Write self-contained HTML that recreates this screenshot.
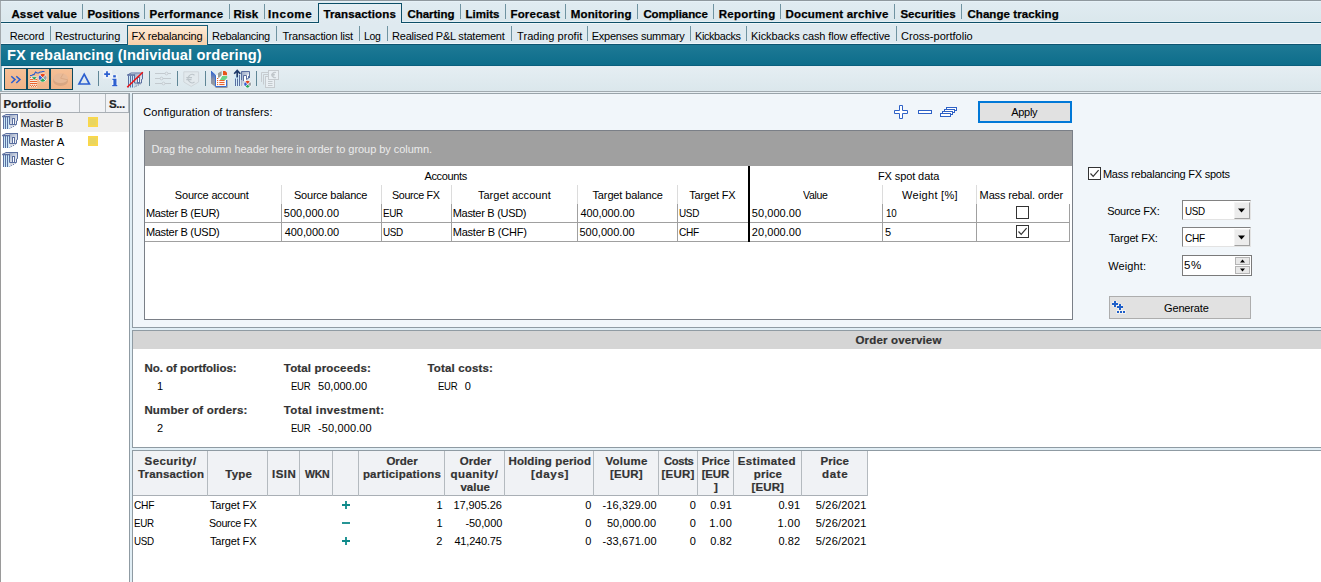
<!DOCTYPE html><html><head><meta charset="utf-8"><title>FX rebalancing</title><style>
html,body{margin:0;padding:0;}
body{width:1321px;height:582px;overflow:hidden;position:relative;background:#fff;font-family:"Liberation Sans",sans-serif;font-size:11px;}
.a,.t,.b{position:absolute;}
.t{white-space:nowrap;line-height:normal;transform-origin:0 0;}
.b{box-sizing:border-box;}
svg{position:absolute;overflow:visible;}

</style></head><body>
<div class="a" style="left:0px;top:0px;width:1321px;height:23px;background:linear-gradient(#e1ecf2,#dae7ec);"></div>
<div class="a" style="left:0px;top:0px;width:1321px;height:1px;background:#8f989e;"></div>
<div class="a" style="left:0px;top:1px;width:1321px;height:1px;background:#e6f1f7;"></div>
<div class="a" style="left:0px;top:21px;width:1321px;height:1px;background:#e4eff5;"></div>
<div class="a" style="left:0px;top:22px;width:1321px;height:1px;background:#0d4f68;"></div>
<div class="a" style="left:0px;top:23px;width:1321px;height:21px;background:#dfeaf0;"></div>
<div class="a" style="left:0px;top:23px;width:1321px;height:1px;background:#eef6f9;"></div>
<div class="a" style="left:0px;top:43px;width:1321px;height:1px;background:#eef6fa;"></div>
<div class="b" style="left:318px;top:3px;width:84px;height:20px;border:1px solid #0d4f68;background:linear-gradient(#e7eff4,#dfeaf0);border-bottom:none;"></div>
<div class="a" style="left:319px;top:23px;width:82px;height:1px;background:#e0eaf0;"></div>
<div class="a" style="left:82px;top:4px;width:1px;height:15px;background:#6f93a1;"></div>
<div class="a" style="left:144px;top:4px;width:1px;height:15px;background:#6f93a1;"></div>
<div class="a" style="left:229px;top:4px;width:1px;height:15px;background:#6f93a1;"></div>
<div class="a" style="left:264px;top:4px;width:1px;height:15px;background:#6f93a1;"></div>
<div class="a" style="left:460px;top:4px;width:1px;height:15px;background:#6f93a1;"></div>
<div class="a" style="left:505px;top:4px;width:1px;height:15px;background:#6f93a1;"></div>
<div class="a" style="left:565px;top:4px;width:1px;height:15px;background:#6f93a1;"></div>
<div class="a" style="left:637px;top:4px;width:1px;height:15px;background:#6f93a1;"></div>
<div class="a" style="left:713px;top:4px;width:1px;height:15px;background:#6f93a1;"></div>
<div class="a" style="left:780px;top:4px;width:1px;height:15px;background:#6f93a1;"></div>
<div class="a" style="left:894px;top:4px;width:1px;height:15px;background:#6f93a1;"></div>
<div class="a" style="left:961px;top:4px;width:1px;height:15px;background:#6f93a1;"></div>
<div class="a" style="left:50px;top:26px;width:1px;height:15px;background:#6f93a1;"></div>
<div class="a" style="left:276px;top:26px;width:1px;height:15px;background:#6f93a1;"></div>
<div class="a" style="left:359px;top:26px;width:1px;height:15px;background:#6f93a1;"></div>
<div class="a" style="left:387px;top:26px;width:1px;height:15px;background:#6f93a1;"></div>
<div class="a" style="left:511px;top:26px;width:1px;height:15px;background:#6f93a1;"></div>
<div class="a" style="left:587px;top:26px;width:1px;height:15px;background:#6f93a1;"></div>
<div class="a" style="left:690px;top:26px;width:1px;height:15px;background:#6f93a1;"></div>
<div class="a" style="left:746px;top:26px;width:1px;height:15px;background:#6f93a1;"></div>
<div class="a" style="left:896px;top:26px;width:1px;height:15px;background:#6f93a1;"></div>
<div class="a" style="left:0px;top:44px;width:1321px;height:22px;background:linear-gradient(#1f7a96,#0c6d8b);"></div>
<div class="a" style="left:0px;top:44px;width:1321px;height:1px;background:#0e5470;"></div>
<div class="a" style="left:0px;top:65px;width:1321px;height:1px;background:#0a607e;"></div>
<div class="b" style="left:127px;top:25px;width:81px;height:20px;border:1px solid #1b5e78;background:linear-gradient(#fdebd8,#f9cfa8);border-bottom:none;"></div>
<div class="a" style="left:0px;top:1px;width:1px;height:65px;background:#a3a9ad;"></div>
<div class="a" style="left:0px;top:66px;width:1321px;height:25px;background:linear-gradient(#e5eef3,#dbe7ec);"></div>
<div class="a" style="left:0px;top:66px;width:2px;height:27px;background:#8ab4c2;"></div>
<div class="a" style="left:2px;top:67px;width:2px;height:24px;background:#f4f9fb;border-radius:2px 0 0 2px;"></div>
<div class="a" style="left:0px;top:91px;width:1321px;height:1px;background:#a2abb0;"></div>
<div class="a" style="left:0px;top:92px;width:1321px;height:1px;background:#e8eff3;"></div>
<div class="a" style="left:4px;top:68px;width:69px;height:22px;background:#0d4a5e;"></div>
<div class="a" style="left:5px;top:69px;width:21px;height:20px;background:linear-gradient(#f6c096,#f0b488);"></div>
<div class="a" style="left:28px;top:69px;width:21px;height:20px;background:linear-gradient(#f6c096,#f0b488);"></div>
<div class="a" style="left:51px;top:69px;width:21px;height:20px;background:linear-gradient(#f6c096,#f0b488);"></div>
<div class="a" style="left:98px;top:71px;width:1px;height:15px;background:#5f8696;"></div>
<div class="a" style="left:149px;top:71px;width:1px;height:15px;background:#5f8696;"></div>
<div class="a" style="left:177px;top:71px;width:1px;height:15px;background:#5f8696;"></div>
<div class="a" style="left:205px;top:71px;width:1px;height:15px;background:#5f8696;"></div>
<div class="a" style="left:256px;top:71px;width:1px;height:15px;background:#5f8696;"></div>
<div class="a" style="left:0px;top:93px;width:130px;height:489px;background:#fff;"></div>
<div class="a" style="left:0px;top:93px;width:1px;height:489px;background:#9a9a9a;"></div>
<div class="a" style="left:1px;top:93px;width:129px;height:1px;background:#9aa4aa;"></div>
<div class="a" style="left:129px;top:93px;width:1px;height:489px;background:#8f9ba3;"></div>
<div class="a" style="left:130px;top:93px;width:2px;height:489px;background:#e1eef5;"></div>
<div class="a" style="left:1px;top:94px;width:128px;height:18px;background:#f0f2f5;"></div>
<div class="a" style="left:1px;top:112px;width:128px;height:1px;background:#a9afb5;"></div>
<div class="a" style="left:79px;top:94px;width:1px;height:18px;background:#b4babf;"></div>
<div class="a" style="left:105px;top:94px;width:1px;height:18px;background:#b4babf;"></div>
<div class="a" style="left:128px;top:94px;width:1px;height:18px;background:#b4babf;"></div>
<div class="a" style="left:20px;top:113px;width:109px;height:19px;background:#efefef;"></div>
<div class="a" style="left:88px;top:117px;width:10px;height:10px;background:#fbd748;"></div>
<div class="a" style="left:90px;top:119px;width:6px;height:6px;background:#e9d55f;box-shadow:0 0 0 1px #f3d755;"></div>
<div class="a" style="left:88px;top:136px;width:10px;height:10px;background:#fbd748;"></div>
<div class="a" style="left:90px;top:138px;width:6px;height:6px;background:#e9d55f;box-shadow:0 0 0 1px #f3d755;"></div>
<div class="a" style="left:132px;top:93px;width:1189px;height:235px;background:#f1f6fa;"></div>
<div class="a" style="left:132px;top:93px;width:1189px;height:1px;background:#9aa4aa;"></div>
<div class="a" style="left:132px;top:93px;width:1px;height:235px;background:#8f9ba3;"></div>
<div class="a" style="left:132px;top:327px;width:1189px;height:1px;background:#8f9ba3;"></div>
<div class="a" style="left:132px;top:328px;width:1189px;height:2px;background:#e1eef5;"></div>
<div class="b" style="left:144px;top:130px;width:929px;height:190px;border:1px solid #7a7f87;background:#fff;"></div>
<div class="a" style="left:145px;top:131px;width:927px;height:35px;background:#a0a0a0;"></div>
<div class="a" style="left:281px;top:185px;width:1px;height:19px;background:#dcdcdc;"></div>
<div class="a" style="left:381px;top:185px;width:1px;height:19px;background:#dcdcdc;"></div>
<div class="a" style="left:451px;top:185px;width:1px;height:19px;background:#dcdcdc;"></div>
<div class="a" style="left:577px;top:185px;width:1px;height:19px;background:#dcdcdc;"></div>
<div class="a" style="left:677px;top:185px;width:1px;height:19px;background:#dcdcdc;"></div>
<div class="a" style="left:882px;top:185px;width:1px;height:19px;background:#dcdcdc;"></div>
<div class="a" style="left:976px;top:185px;width:1px;height:19px;background:#dcdcdc;"></div>
<div class="a" style="left:281px;top:204px;width:1px;height:38px;background:#a0a0a0;"></div>
<div class="a" style="left:381px;top:204px;width:1px;height:38px;background:#a0a0a0;"></div>
<div class="a" style="left:451px;top:204px;width:1px;height:38px;background:#a0a0a0;"></div>
<div class="a" style="left:577px;top:204px;width:1px;height:38px;background:#a0a0a0;"></div>
<div class="a" style="left:677px;top:204px;width:1px;height:38px;background:#a0a0a0;"></div>
<div class="a" style="left:882px;top:204px;width:1px;height:38px;background:#a0a0a0;"></div>
<div class="a" style="left:976px;top:204px;width:1px;height:38px;background:#a0a0a0;"></div>
<div class="a" style="left:1069px;top:204px;width:1px;height:38px;background:#a0a0a0;"></div>
<div class="a" style="left:145px;top:222px;width:925px;height:1px;background:#a0a0a0;"></div>
<div class="a" style="left:145px;top:241px;width:925px;height:1px;background:#a0a0a0;"></div>
<div class="a" style="left:748px;top:166px;width:2px;height:76px;background:#000;"></div>
<div class="b" style="left:1016px;top:206px;width:13px;height:13px;border:1px solid #333;background:#fff;"></div>
<div class="b" style="left:1016px;top:225px;width:13px;height:13px;border:1px solid #333;background:#fff;"></div>
<div class="b" style="left:978px;top:101px;width:94px;height:22px;border:2px solid #0078d7;background:#e1e1e1;"></div>
<div class="b" style="left:1088px;top:167px;width:13px;height:13px;border:1px solid #333;background:#fff;"></div>
<div class="b" style="left:1182px;top:200px;width:69px;height:20px;border:1px solid #a0a0a0;background:#fff;border-top-color:#828282;border-left-color:#828282;border-right-color:#e3e3e3;border-bottom-color:#e3e3e3;"></div>
<div class="b" style="left:1234px;top:202px;width:16px;height:17px;border:1px solid #f4f4f4;background:#ececec;border-right-color:#a0a0a0;border-bottom-color:#a0a0a0;"></div>
<div class="b" style="left:1182px;top:227px;width:69px;height:20px;border:1px solid #a0a0a0;background:#fff;border-top-color:#828282;border-left-color:#828282;border-right-color:#e3e3e3;border-bottom-color:#e3e3e3;"></div>
<div class="b" style="left:1234px;top:229px;width:16px;height:17px;border:1px solid #f4f4f4;background:#ececec;border-right-color:#a0a0a0;border-bottom-color:#a0a0a0;"></div>
<div class="b" style="left:1182px;top:255px;width:70px;height:21px;border:1px solid #7a7a7a;background:#fff;"></div>
<div class="b" style="left:1235px;top:257px;width:15px;height:8px;border:1px solid #b4b4b4;background:#e8e8e8;"></div>
<div class="b" style="left:1235px;top:266px;width:15px;height:8px;border:1px solid #b4b4b4;background:#e8e8e8;"></div>
<div class="b" style="left:1109px;top:296px;width:142px;height:23px;border:1px solid #adadad;background:#e1e1e1;"></div>
<div class="a" style="left:132px;top:330px;width:1189px;height:118px;background:#fff;"></div>
<div class="a" style="left:132px;top:330px;width:1189px;height:1px;background:#8f9ba3;"></div>
<div class="a" style="left:132px;top:330px;width:1px;height:118px;background:#8f9ba3;"></div>
<div class="a" style="left:133px;top:331px;width:1188px;height:18px;background:#d5d5d5;"></div>
<div class="a" style="left:132px;top:447px;width:1189px;height:1px;background:#8f9ba3;"></div>
<div class="a" style="left:132px;top:448px;width:1189px;height:2px;background:#e1eef5;"></div>
<div class="a" style="left:132px;top:450px;width:1189px;height:132px;background:#fff;"></div>
<div class="a" style="left:132px;top:450px;width:1189px;height:1px;background:#8f9ba3;"></div>
<div class="a" style="left:132px;top:450px;width:1px;height:132px;background:#8f9ba3;"></div>
<div class="a" style="left:133px;top:451px;width:735px;height:44px;background:#f0f2f5;"></div>
<div class="a" style="left:133px;top:495px;width:735px;height:1px;background:#a9afb5;"></div>
<div class="a" style="left:207px;top:451px;width:1px;height:45px;background:#b4babf;"></div>
<div class="a" style="left:267px;top:451px;width:1px;height:45px;background:#b4babf;"></div>
<div class="a" style="left:299px;top:451px;width:1px;height:45px;background:#b4babf;"></div>
<div class="a" style="left:332px;top:451px;width:1px;height:45px;background:#b4babf;"></div>
<div class="a" style="left:358px;top:451px;width:1px;height:45px;background:#b4babf;"></div>
<div class="a" style="left:444px;top:451px;width:1px;height:45px;background:#b4babf;"></div>
<div class="a" style="left:504px;top:451px;width:1px;height:45px;background:#b4babf;"></div>
<div class="a" style="left:593px;top:451px;width:1px;height:45px;background:#b4babf;"></div>
<div class="a" style="left:658px;top:451px;width:1px;height:45px;background:#b4babf;"></div>
<div class="a" style="left:697px;top:451px;width:1px;height:45px;background:#b4babf;"></div>
<div class="a" style="left:733px;top:451px;width:1px;height:45px;background:#b4babf;"></div>
<div class="a" style="left:801px;top:451px;width:1px;height:45px;background:#b4babf;"></div>
<div class="a" style="left:867px;top:451px;width:1px;height:45px;background:#b4babf;"></div><svg width="1321" height="582" viewBox="0 0 1321 582" style="left:0;top:0;pointer-events:none">
<defs>
<linearGradient id="gpf" x1="0" y1="0" x2="1" y2="1"><stop offset="0" stop-color="#9aa8c4"/><stop offset="1" stop-color="#ffffff"/></linearGradient>
<linearGradient id="gbk" x1="0" y1="0" x2="0" y2="1"><stop offset="0" stop-color="#2c5fd0"/><stop offset="0.55" stop-color="#8a93a8"/><stop offset="1" stop-color="#9a9a9a"/></linearGradient>
</defs>
<g transform="translate(2,113)" opacity="1"><polygon points="7.5,2 15.5,2 15.5,7.5 14.5,11 7.5,11" fill="url(#gpf)"/><polygon points="7.5,11.5 14.5,11.5 7.5,15" fill="#aeb6c8" opacity=".55"/><rect x="1" y="4" width="6" height="12" fill="#c9e9fa"/><path d="M4,1.5 H16 M15.5,1.5 V7.5 M0.5,3.5 L4,1.5" stroke="#5b6fa0" stroke-width="1" fill="none"/><path d="M0.3,3.5 H8" stroke="#5b6fa0" stroke-width="1.6" fill="none"/><path d="M1.5,4 V16 M3.5,4 V16 M5.5,4 V16 M7.5,3.5 V11.5 M7.5,11.5 H14.5 M14.5,8 V11.5 M15.5,7 L14.5,8.5" stroke="#5b6fa0" stroke-width="1" fill="none"/><rect x="10.5" y="5.5" width="2" height="6" fill="#fff" stroke="#5b6fa0" stroke-width="1"/><path d="M7.5,15.5 L13.5,12.5" stroke="#5b6fa0" stroke-width="1" stroke-dasharray="1,1" fill="none"/></g>
<g transform="translate(2,132)" opacity="1"><polygon points="7.5,2 15.5,2 15.5,7.5 14.5,11 7.5,11" fill="url(#gpf)"/><polygon points="7.5,11.5 14.5,11.5 7.5,15" fill="#aeb6c8" opacity=".55"/><rect x="1" y="4" width="6" height="12" fill="#c9e9fa"/><path d="M4,1.5 H16 M15.5,1.5 V7.5 M0.5,3.5 L4,1.5" stroke="#5b6fa0" stroke-width="1" fill="none"/><path d="M0.3,3.5 H8" stroke="#5b6fa0" stroke-width="1.6" fill="none"/><path d="M1.5,4 V16 M3.5,4 V16 M5.5,4 V16 M7.5,3.5 V11.5 M7.5,11.5 H14.5 M14.5,8 V11.5 M15.5,7 L14.5,8.5" stroke="#5b6fa0" stroke-width="1" fill="none"/><rect x="10.5" y="5.5" width="2" height="6" fill="#fff" stroke="#5b6fa0" stroke-width="1"/><path d="M7.5,15.5 L13.5,12.5" stroke="#5b6fa0" stroke-width="1" stroke-dasharray="1,1" fill="none"/></g>
<g transform="translate(2,151)" opacity="1"><polygon points="7.5,2 15.5,2 15.5,7.5 14.5,11 7.5,11" fill="url(#gpf)"/><polygon points="7.5,11.5 14.5,11.5 7.5,15" fill="#aeb6c8" opacity=".55"/><rect x="1" y="4" width="6" height="12" fill="#c9e9fa"/><path d="M4,1.5 H16 M15.5,1.5 V7.5 M0.5,3.5 L4,1.5" stroke="#5b6fa0" stroke-width="1" fill="none"/><path d="M0.3,3.5 H8" stroke="#5b6fa0" stroke-width="1.6" fill="none"/><path d="M1.5,4 V16 M3.5,4 V16 M5.5,4 V16 M7.5,3.5 V11.5 M7.5,11.5 H14.5 M14.5,8 V11.5 M15.5,7 L14.5,8.5" stroke="#5b6fa0" stroke-width="1" fill="none"/><rect x="10.5" y="5.5" width="2" height="6" fill="#fff" stroke="#5b6fa0" stroke-width="1"/><path d="M7.5,15.5 L13.5,12.5" stroke="#5b6fa0" stroke-width="1" stroke-dasharray="1,1" fill="none"/></g>
<path d="M11.3,76.2 L15,79.6 L11.3,83 M16.3,76.2 L20,79.6 L16.3,83" stroke="#2c5fd0" stroke-width="1.5" fill="none"/>
<path d="M30,75.6 H31.5 L33,74.6 H34 L35.6,72 L37,73 H38.5 L40,72 H41.5 L42.5,71.5 H44.5" stroke="#2c5fd0" stroke-width="1.1" fill="none"/>
<rect x="30" y="76.6" width="7.2" height="10.6" fill="#fbe9dc"/>
<path d="M30,77.4 H37.2" stroke="#e8541a" stroke-width="0.9" stroke-dasharray="1,1"/>
<path d="M30,79.5 H37.2 M30,81.5 H37.2 M30,83.5 H37.2" stroke="#e8541a" stroke-width="0.9"/>
<path d="M30,85.3 H37.2" stroke="#e8541a" stroke-width="1" stroke-dasharray="1,1"/>
<path d="M31,86.3 H37.2" stroke="#e8541a" stroke-width="1" stroke-dasharray="1,1"/>
<polygon points="31.3,76.8 37.3,76.8 34.3,80.2" fill="#1f9a50" stroke="#fff" stroke-width=".6"/>
<circle cx="42.7" cy="77.8" r="4.3" fill="#fff"/>
<path d="M42.7,77.8 L40.01,75.11 A3.8,3.8 0 0 1 45.39,75.11 Z" fill="#e8451a"/>
<path d="M42.7,77.8 L45.39,75.11 A3.8,3.8 0 0 1 45.39,80.49 Z" fill="#9aa0a4"/>
<path d="M42.7,77.8 L45.39,80.49 A3.8,3.8 0 0 1 40.01,80.49 Z" fill="#2aa65a"/>
<path d="M42.7,77.8 L40.01,80.49 A3.8,3.8 0 0 1 40.01,75.11 Z" fill="#3a5fd0"/>
<path d="M39.736000000000004,74.836 L45.664,80.764 M45.664,74.836 L39.736000000000004,80.764" stroke="#fff" stroke-width=".7"/>
<path d="M53.3,78.2 v3 a7.3,4.8 0 0 0 14.6,0 v-3 z" fill="#d8a682"/>
<ellipse cx="60.6" cy="78.2" rx="7.3" ry="4.9" fill="#e8ba98"/>
<path d="M60.6,78.2 L63.2,73.8 M60.6,78.2 L67.6,79.8" stroke="#d8a682" stroke-width=".8"/>
<path d="M84.2,74.2 L89.4,84 H79 Z" stroke="#2c5fd0" stroke-width="1.7" fill="none" stroke-linejoin="miter"/>
<rect x="103" y="70" width="9" height="8.5" fill="#eef3f7" opacity=".9"/>
<path d="M107,71.3 V77 M104.2,74.1 H110" stroke="#2c5fd0" stroke-width="1.8"/>
<rect x="112" y="74.5" width="5.5" height="12.5" fill="#f2f6f9" opacity=".9"/>
<rect x="113.2" y="75.2" width="2.6" height="2.2" fill="#2c5fd0"/>
<path d="M112.4,79.4 H115.8 V85.4 M112.2,85.7 H117.3" stroke="#2c5fd0" stroke-width="1.3" fill="none"/>
<rect x="113.4" y="79" width="2.4" height="7" fill="#2c5fd0"/>
<g transform="translate(127,71.5)" opacity="1"><polygon points="7.5,2 15.5,2 15.5,7.5 14.5,11 7.5,11" fill="url(#gpf)"/><polygon points="7.5,11.5 14.5,11.5 7.5,15" fill="#aeb6c8" opacity=".55"/><rect x="1" y="4" width="6" height="12" fill="#c9e9fa"/><path d="M4,1.5 H16 M15.5,1.5 V7.5 M0.5,3.5 L4,1.5" stroke="#5b6fa0" stroke-width="1" fill="none"/><path d="M0.3,3.5 H8" stroke="#5b6fa0" stroke-width="1.6" fill="none"/><path d="M1.5,4 V16 M3.5,4 V16 M5.5,4 V16 M7.5,3.5 V11.5 M7.5,11.5 H14.5 M14.5,8 V11.5 M15.5,7 L14.5,8.5" stroke="#5b6fa0" stroke-width="1" fill="none"/><rect x="10.5" y="5.5" width="2" height="6" fill="#fff" stroke="#5b6fa0" stroke-width="1"/><path d="M7.5,15.5 L13.5,12.5" stroke="#5b6fa0" stroke-width="1" stroke-dasharray="1,1" fill="none"/></g>
<path d="M127.2,87.2 L142.8,72.2" stroke="#f01010" stroke-width="1.5"/>
<path d="M155,73.5 H171 M155,78.5 H171 M155,83.5 H171" stroke="#c3cacf" stroke-width="1"/>
<circle cx="166.5" cy="73.5" r="1.4" fill="#e3ebf0" stroke="#c3cacf" stroke-width=".9"/>
<circle cx="161.5" cy="78.5" r="1.4" fill="#e3ebf0" stroke="#c3cacf" stroke-width=".9"/>
<circle cx="163.5" cy="83.5" r="1.4" fill="#e3ebf0" stroke="#c3cacf" stroke-width=".9"/>
<path d="M183.8,71.8 H198.6 V82 L191.2,86.4 L183.8,82 Z" fill="#e2e9ed" stroke="#cfd6da" stroke-width="1"/>
<path d="M194.5,75.2 A4,4.2 0 1 0 194.5,82 M186.3,77.6 H192 M186.3,79.6 H191.5" stroke="#bcc4c9" stroke-width="1.1" fill="none"/>
<polygon points="211,71 215.5,75.2 215.5,87 211,83.4" fill="url(#gbk)"/>
<rect x="215.5" y="75" width="11" height="11.5" fill="#fff"/>
<path d="M215.5,87.5 H227.2 V80" stroke="#9a9a9a" stroke-width="1" fill="none"/>
<path d="M211,71 L215.5,75.2 V86.5 H226.5 V80" stroke="#3a6fd0" stroke-width="1" fill="none"/>
<polygon points="218,73.2 221.6,71 221.6,75.6 218.6,78.2 218,77" fill="#9a9e98"/>
<polygon points="223,71 225.2,71 227,72.8 227,75.2 223,75.2" fill="#e8541a"/>
<polygon points="222.2,76 227.2,76 227.2,78 225,80.2 219.8,80.2" fill="#6dd38a"/>
<path d="M217,78.5 h1.2 M217,80.6 h1.2 M217,82.6 h1.2 M217,84.6 h1.2 M219.3,80.6 H224.6 M219.3,82.6 H224.6 M219.3,84.6 H224.6" stroke="#e8541a" stroke-width="1"/>
<rect x="234.3" y="75" width="6" height="11" fill="#d3ecfa"/>
<path d="M235.5,78.5 V86 M237.5,78.5 V86 M239.5,75 V86" stroke="#5b6fa0" stroke-width="1"/>
<path d="M237.2,70.6 V77.5 M234.2,73.8 L237.2,70.5 L240.3,73.8" stroke="#1f3a6a" stroke-width="1.7" fill="none"/>
<polygon points="241.5,71.5 249.5,71.5 249.5,78 248,82 241.5,86" fill="url(#gpf)"/>
<path d="M241.5,80 V71.5 H249.5 V78" stroke="#5b6fa0" stroke-width="1" fill="none"/>
<path d="M241.5,80 V86" stroke="#a9b3c8" stroke-width="1" fill="none"/>
<polygon points="243,79 244.5,76 246.5,76 248.5,73.5 248.5,77 246,81 243,81" fill="#fff"/>
<path d="M243.5,81 V75.5 H246.5 V79.5 M248.5,76 V78.5 M246.5,79.5 L248.5,78" stroke="#5b6fa0" stroke-width="1" fill="none"/>
<circle cx="247.6" cy="84.2" r="3.8" fill="#fff"/>
<path d="M247.6,84.2 L245.27,81.87 A3.3,3.3 0 0 1 249.93,81.87 Z" fill="#e8451a"/>
<path d="M247.6,84.2 L249.93,81.87 A3.3,3.3 0 0 1 249.93,86.53 Z" fill="#9aa0a4"/>
<path d="M247.6,84.2 L249.93,86.53 A3.3,3.3 0 0 1 245.27,86.53 Z" fill="#2aa65a"/>
<path d="M247.6,84.2 L245.27,86.53 A3.3,3.3 0 0 1 245.27,81.87 Z" fill="#3a5fd0"/>
<path d="M245.02599999999998,81.626 L250.174,86.774 M250.174,81.626 L245.02599999999998,86.774" stroke="#fff" stroke-width=".7"/>
<path d="M261.5,82 V72.5 H269" stroke="#c6cbcf" stroke-width="1" fill="none"/>
<path d="M263.5,84.5 V74.5 H269" stroke="#c6cbcf" stroke-width="1" fill="none"/>
<rect x="265.5" y="76.5" width="9" height="11" fill="#e9eff3" stroke="#c6cbcf" stroke-width="1"/>
<path d="M268,81.5 H272.5 M268,83.5 H272.5 M268,85.5 H272.5" stroke="#c3c9cd" stroke-width="1"/>
<rect x="268.5" y="70.5" width="10" height="9" fill="#e9eff3" stroke="#c6cbcf" stroke-width="1"/>
<path d="M276,72.6 A2.7,2.7 0 1 0 276,77.4 M271.2,74.4 H274.8 M271.2,75.8 H274.5" stroke="#bfc5c9" stroke-width="1.1" fill="none"/>
<path d="M899.5,105.5 H902.5 V110.5 H907.5 V113.5 H902.5 V118.5 H899.5 V113.5 H894.5 V110.5 H899.5 Z" fill="#fff" stroke="#2f62c6" stroke-width="1"/>
<rect x="918.5" y="110.5" width="13" height="3" fill="#fff" stroke="#2f62c6" stroke-width="1"/>
<rect x="946.5" y="107.5" width="10" height="3" fill="#fff" stroke="#2f62c6" stroke-width="1"/>
<rect x="944.5" y="109.5" width="10" height="3" fill="#fff" stroke="#2f62c6" stroke-width="1"/>
<rect x="942.5" y="111.5" width="10" height="3" fill="#fff" stroke="#2f62c6" stroke-width="1"/>
<rect x="940.5" y="113.5" width="10" height="3" fill="#fff" stroke="#2f62c6" stroke-width="1"/>
<path d="M1018.5,231.5 L1021.2,234.4 L1026.6,228.2" stroke="#333" stroke-width="1.2" fill="none"/>
<path d="M1090.5,173.5 L1093.2,176.4 L1098.6,170.2" stroke="#333" stroke-width="1.2" fill="none"/>
<polygon points="1238,208.5 1245,208.5 1241.5,212.5" fill="#000"/>
<polygon points="1238,235.5 1245,235.5 1241.5,239.5" fill="#000"/>
<polygon points="1240,262.5 1245,262.5 1242.5,259.5" fill="#000"/>
<polygon points="1240,268.5 1245,268.5 1242.5,271.5" fill="#000"/>
<path d="M1115,301 V307 M1112,304 H1118 M1120,304 V310 M1117,307 H1123" stroke="#f4f4f4" stroke-width="3.6" fill="none"/>
<path d="M1115,301 V307 M1112,304 H1118 M1120,304 V310 M1117,307 H1123" stroke="#1f5fc8" stroke-width="2" fill="none"/>
<rect x="1116.2" y="310.2" width="9.6" height="3.6" fill="#f4f4f4"/>
<rect x="1117" y="311" width="2" height="2" fill="#1f5fc8"/>
<rect x="1120" y="311" width="2" height="2" fill="#1f5fc8"/>
<rect x="1123" y="311" width="2" height="2" fill="#1f5fc8"/>
<path d="M342,505 H350 M346,501 V509" stroke="#0e8a8a" stroke-width="1.8"/>
<path d="M342,541 H350 M346,537 V545" stroke="#0e8a8a" stroke-width="1.8"/>
<path d="M342,523 H350" stroke="#0e8a8a" stroke-width="1.8"/>
</svg>
<div id="txt">
<span class="t" id="t0" style="left:11.40px;top:8.00px;font-size:11.5px;font-weight:700;color:#000;letter-spacing:0.150px;-webkit-text-stroke:0.25px #000;">Asset value</span>
<span class="t" id="t1" style="left:87.40px;top:8.00px;font-size:11.5px;font-weight:700;color:#000;letter-spacing:0.062px;-webkit-text-stroke:0.25px #000;">Positions</span>
<span class="t" id="t2" style="left:149.40px;top:8.00px;font-size:11.5px;font-weight:700;color:#000;letter-spacing:0.350px;-webkit-text-stroke:0.25px #000;">Performance</span>
<span class="t" id="t3" style="left:233.40px;top:8.00px;font-size:11.5px;font-weight:700;color:#000;letter-spacing:0.167px;-webkit-text-stroke:0.25px #000;">Risk</span>
<span class="t" id="t4" style="left:268.39px;top:8.00px;font-size:11.5px;font-weight:700;color:#000;letter-spacing:0.600px;transform:scaleX(1.0119);-webkit-text-stroke:0.25px #000;">Income</span>
<span class="t" id="t5" style="left:323.40px;top:8.00px;font-size:11.5px;font-weight:700;color:#000;letter-spacing:0.136px;-webkit-text-stroke:0.25px #000;">Transactions</span>
<span class="t" id="t6" style="left:407.40px;top:8.00px;font-size:11.5px;font-weight:700;color:#000;letter-spacing:-0.029px;-webkit-text-stroke:0.25px #000;">Charting</span>
<span class="t" id="t7" style="left:465.40px;top:8.00px;font-size:11.5px;font-weight:700;color:#000;letter-spacing:0.040px;-webkit-text-stroke:0.25px #000;">Limits</span>
<span class="t" id="t8" style="left:510.40px;top:8.00px;font-size:11.5px;font-weight:700;color:#000;letter-spacing:0.214px;-webkit-text-stroke:0.25px #000;">Forecast</span>
<span class="t" id="t9" style="left:570.70px;top:8.00px;font-size:11.5px;font-weight:700;color:#000;letter-spacing:0.167px;-webkit-text-stroke:0.25px #000;">Monitoring</span>
<span class="t" id="t10" style="left:643.40px;top:8.00px;font-size:11.5px;font-weight:700;color:#000;letter-spacing:-0.089px;-webkit-text-stroke:0.25px #000;">Compliance</span>
<span class="t" id="t11" style="left:718.70px;top:8.00px;font-size:11.5px;font-weight:700;color:#000;letter-spacing:0.275px;-webkit-text-stroke:0.25px #000;">Reporting</span>
<span class="t" id="t12" style="left:785.40px;top:8.00px;font-size:11.5px;font-weight:700;color:#000;letter-spacing:0.213px;-webkit-text-stroke:0.25px #000;">Document archive</span>
<span class="t" id="t13" style="left:900.40px;top:8.00px;font-size:11.5px;font-weight:700;color:#000;letter-spacing:0.022px;-webkit-text-stroke:0.25px #000;">Securities</span>
<span class="t" id="t14" style="left:967.40px;top:8.00px;font-size:11.5px;font-weight:700;color:#000;letter-spacing:0.086px;-webkit-text-stroke:0.25px #000;">Change tracking</span>
<span class="t" id="t15" style="left:9.70px;top:30.00px;font-size:11px;font-weight:400;color:#000;letter-spacing:-0.160px;">Record</span>
<span class="t" id="t16" style="left:55.10px;top:30.00px;font-size:11px;font-weight:400;color:#000;letter-spacing:-0.017px;">Restructuring</span>
<span class="t" id="t17" style="left:131.40px;top:30.00px;font-size:11px;font-weight:400;color:#000;letter-spacing:-0.215px;">FX rebalancing</span>
<span class="t" id="t18" style="left:212.10px;top:30.00px;font-size:11px;font-weight:400;color:#000;letter-spacing:-0.320px;">Rebalancing</span>
<span class="t" id="t19" style="left:282.40px;top:30.00px;font-size:11px;font-weight:400;color:#000;letter-spacing:-0.187px;">Transaction list</span>
<span class="t" id="t20" style="left:364.45px;top:30.00px;font-size:11px;font-weight:400;color:#000;letter-spacing:-0.350px;transform:scaleX(0.9509);">Log</span>
<span class="t" id="t21" style="left:392.10px;top:30.00px;font-size:11px;font-weight:400;color:#000;letter-spacing:-0.233px;">Realised P&amp;L statement</span>
<span class="t" id="t22" style="left:517.10px;top:30.00px;font-size:11px;font-weight:400;color:#000;letter-spacing:0.062px;">Trading profit</span>
<span class="t" id="t23" style="left:591.70px;top:30.00px;font-size:11px;font-weight:400;color:#000;letter-spacing:-0.233px;">Expenses summary</span>
<span class="t" id="t24" style="left:695.12px;top:30.00px;font-size:11px;font-weight:400;color:#000;letter-spacing:-0.350px;transform:scaleX(0.9845);">Kickbacks</span>
<span class="t" id="t25" style="left:751.10px;top:30.00px;font-size:11px;font-weight:400;color:#000;letter-spacing:-0.114px;">Kickbacks cash flow effective</span>
<span class="t" id="t26" style="left:901.10px;top:30.00px;font-size:11px;font-weight:400;color:#000;letter-spacing:0.007px;">Cross-portfolio</span>
<span class="t" id="t27" style="left:6.90px;top:47.00px;font-size:14.67px;font-weight:700;color:#fff;letter-spacing:0.114px;">FX rebalancing (Individual ordering)</span>
<span class="t" id="t28" style="left:3.40px;top:97.50px;font-size:11.5px;font-weight:700;color:#222;letter-spacing:0.062px;-webkit-text-stroke:0.2px #222;">Portfolio</span>
<span class="t" id="t29" style="left:108.90px;top:97.50px;font-size:11.5px;font-weight:700;color:#222;letter-spacing:-0.333px;-webkit-text-stroke:0.2px #222;">S...</span>
<span class="t" id="t30" style="left:20.40px;top:117.00px;font-size:11px;font-weight:400;color:#000;letter-spacing:-0.143px;">Master B</span>
<span class="t" id="t31" style="left:20.40px;top:136.00px;font-size:11px;font-weight:400;color:#000;letter-spacing:0.071px;">Master A</span>
<span class="t" id="t32" style="left:20.40px;top:155.00px;font-size:11px;font-weight:400;color:#000;letter-spacing:-0.071px;">Master C</span>
<span class="t" id="t33" style="left:143.20px;top:106.00px;font-size:11px;font-weight:400;color:#000;letter-spacing:0.104px;">Configuration of transfers:</span>
<span class="t" id="t34" style="left:151.40px;top:143.00px;font-size:11px;font-weight:400;color:#ebebeb;letter-spacing:-0.045px;">Drag the column header here in order to group by column.</span>
<span class="t" id="t35" style="left:424.40px;top:170.00px;font-size:11px;font-weight:400;color:#000;letter-spacing:-0.350px;">Accounts</span>
<span class="t" id="t36" style="left:877.90px;top:170.00px;font-size:11px;font-weight:400;color:#000;letter-spacing:-0.091px;">FX spot data</span>
<span class="t" id="t37" style="left:174.80px;top:189.00px;font-size:11px;font-weight:400;color:#000;letter-spacing:-0.185px;">Source account</span>
<span class="t" id="t38" style="left:294.00px;top:189.00px;font-size:11px;font-weight:400;color:#000;letter-spacing:-0.231px;">Source balance</span>
<span class="t" id="t39" style="left:391.92px;top:189.00px;font-size:11px;font-weight:400;color:#000;letter-spacing:-0.350px;transform:scaleX(0.9751);">Source FX</span>
<span class="t" id="t40" style="left:477.90px;top:189.00px;font-size:11px;font-weight:400;color:#000;letter-spacing:0.054px;">Target account</span>
<span class="t" id="t41" style="left:592.50px;top:189.00px;font-size:11px;font-weight:400;color:#000;letter-spacing:-0.131px;">Target balance</span>
<span class="t" id="t42" style="left:689.20px;top:189.00px;font-size:11px;font-weight:400;color:#000;letter-spacing:-0.150px;">Target FX</span>
<span class="t" id="t43" style="left:803.40px;top:189.00px;font-size:11px;font-weight:400;color:#000;letter-spacing:-0.350px;transform:scaleX(0.9570);">Value</span>
<span class="t" id="t44" style="left:902.00px;top:189.00px;font-size:11px;font-weight:400;color:#000;letter-spacing:0.289px;">Weight [%]</span>
<span class="t" id="t45" style="left:979.60px;top:189.00px;font-size:11px;font-weight:400;color:#000;letter-spacing:-0.131px;">Mass rebal. order</span>
<span class="t" id="t46" style="left:145.90px;top:207.00px;font-size:11px;font-weight:400;color:#000;letter-spacing:-0.292px;">Master B (EUR)</span>
<span class="t" id="t47" style="left:283.80px;top:207.00px;font-size:11px;font-weight:400;color:#000;letter-spacing:0.022px;">500,000.00</span>
<span class="t" id="t48" style="left:382.70px;top:207.00px;font-size:11px;font-weight:400;color:#000;letter-spacing:-0.350px;transform:scaleX(0.8967);">EUR</span>
<span class="t" id="t49" style="left:452.70px;top:207.00px;font-size:11px;font-weight:400;color:#000;letter-spacing:-0.292px;">Master B (USD)</span>
<span class="t" id="t50" style="left:580.40px;top:207.00px;font-size:11px;font-weight:400;color:#000;letter-spacing:-0.089px;">400,000.00</span>
<span class="t" id="t51" style="left:678.80px;top:207.00px;font-size:11px;font-weight:400;color:#000;letter-spacing:-0.350px;transform:scaleX(0.9014);">USD</span>
<span class="t" id="t52" style="left:751.80px;top:207.00px;font-size:11px;font-weight:400;color:#000;letter-spacing:0.050px;">50,000.00</span>
<span class="t" id="t53" style="left:885.51px;top:207.00px;font-size:11px;font-weight:400;color:#000;letter-spacing:-0.350px;transform:scaleX(0.8920);">10</span>
<span class="t" id="t54" style="left:145.90px;top:226.00px;font-size:11px;font-weight:400;color:#000;letter-spacing:-0.292px;">Master B (USD)</span>
<span class="t" id="t55" style="left:284.80px;top:226.00px;font-size:11px;font-weight:400;color:#000;letter-spacing:-0.089px;">400,000.00</span>
<span class="t" id="t56" style="left:382.70px;top:226.00px;font-size:11px;font-weight:400;color:#000;letter-spacing:-0.350px;transform:scaleX(0.8967);">USD</span>
<span class="t" id="t57" style="left:452.70px;top:226.00px;font-size:11px;font-weight:400;color:#000;letter-spacing:-0.215px;">Master B (CHF)</span>
<span class="t" id="t58" style="left:579.40px;top:226.00px;font-size:11px;font-weight:400;color:#000;letter-spacing:0.022px;">500,000.00</span>
<span class="t" id="t59" style="left:678.78px;top:226.00px;font-size:11px;font-weight:400;color:#000;letter-spacing:-0.350px;transform:scaleX(0.9212);">CHF</span>
<span class="t" id="t60" style="left:751.80px;top:226.00px;font-size:11px;font-weight:400;color:#000;letter-spacing:0.050px;">20,000.00</span>
<span class="t" id="t61" style="left:885.00px;top:226.00px;font-size:11px;font-weight:400;color:#000;">5</span>
<span class="t" id="t62" style="left:1011.20px;top:106.00px;font-size:11px;font-weight:400;color:#000;letter-spacing:-0.275px;">Apply</span>
<span class="t" id="t63" style="left:1102.90px;top:168.00px;font-size:11px;font-weight:400;color:#000;letter-spacing:-0.229px;">Mass rebalancing FX spots</span>
<span class="t" id="t64" style="left:1107.20px;top:205.00px;font-size:11px;font-weight:400;color:#000;letter-spacing:-0.278px;">Source FX:</span>
<span class="t" id="t65" style="left:1108.70px;top:232.00px;font-size:11px;font-weight:400;color:#000;letter-spacing:-0.167px;">Target FX:</span>
<span class="t" id="t66" style="left:1108.20px;top:260.00px;font-size:11px;font-weight:400;color:#000;letter-spacing:0.117px;">Weight:</span>
<span class="t" id="t67" style="left:1184.91px;top:205.00px;font-size:11px;font-weight:400;color:#000;letter-spacing:-0.350px;transform:scaleX(0.8920);">USD</span>
<span class="t" id="t68" style="left:1184.88px;top:232.00px;font-size:11px;font-weight:400;color:#000;letter-spacing:-0.350px;transform:scaleX(0.9163);">CHF</span>
<span class="t" id="t69" style="left:1184.36px;top:259.00px;font-size:11px;font-weight:400;color:#000;letter-spacing:0.600px;transform:scaleX(1.0449);">5%</span>
<span class="t" id="t70" style="left:1164.10px;top:302.00px;font-size:11px;font-weight:400;color:#000;letter-spacing:-0.171px;">Generate</span>
<span class="t" id="t71" style="left:855.50px;top:334.00px;font-size:11.5px;font-weight:700;color:#333;letter-spacing:0.162px;-webkit-text-stroke:0.2px #333;">Order overview</span>
<span class="t" id="t72" style="left:144.40px;top:362.00px;font-size:11.5px;font-weight:700;color:#333;letter-spacing:-0.024px;-webkit-text-stroke:0.2px #333;">No. of portfolios:</span>
<span class="t" id="t73" style="left:144.40px;top:404.00px;font-size:11.5px;font-weight:700;color:#333;letter-spacing:0.162px;-webkit-text-stroke:0.2px #333;">Number of orders:</span>
<span class="t" id="t74" style="left:283.80px;top:362.00px;font-size:11.5px;font-weight:700;color:#333;letter-spacing:0.157px;-webkit-text-stroke:0.2px #333;">Total proceeds:</span>
<span class="t" id="t75" style="left:283.80px;top:404.00px;font-size:11.5px;font-weight:700;color:#333;letter-spacing:0.369px;-webkit-text-stroke:0.2px #333;">Total investment:</span>
<span class="t" id="t76" style="left:427.50px;top:362.00px;font-size:11.5px;font-weight:700;color:#333;letter-spacing:0.145px;-webkit-text-stroke:0.2px #333;">Total costs:</span>
<span class="t" id="t77" style="left:157.00px;top:380.00px;font-size:11px;font-weight:400;color:#000;">1</span>
<span class="t" id="t78" style="left:157.00px;top:422.00px;font-size:11px;font-weight:400;color:#000;">2</span>
<span class="t" id="t79" style="left:291.03px;top:380.00px;font-size:11px;font-weight:400;color:#000;letter-spacing:-0.350px;transform:scaleX(0.8685);">EUR</span>
<span class="t" id="t80" style="left:318.10px;top:380.00px;font-size:11px;font-weight:400;color:#000;">50,000.00</span>
<span class="t" id="t81" style="left:291.03px;top:422.00px;font-size:11px;font-weight:400;color:#000;letter-spacing:-0.350px;transform:scaleX(0.8685);">EUR</span>
<span class="t" id="t82" style="left:318.10px;top:422.00px;font-size:11px;font-weight:400;color:#000;letter-spacing:0.111px;">-50,000.00</span>
<span class="t" id="t83" style="left:438.03px;top:380.00px;font-size:11px;font-weight:400;color:#000;letter-spacing:-0.350px;transform:scaleX(0.8685);">EUR</span>
<span class="t" id="t84" style="left:464.75px;top:380.00px;font-size:11px;font-weight:400;color:#000;">0</span>
<span class="t" id="t85" style="left:144.60px;top:455.00px;font-size:11.5px;font-weight:700;color:#333;letter-spacing:0.363px;-webkit-text-stroke:0.2px #333;">Security/</span>
<span class="t" id="t86" style="left:138.10px;top:468.00px;font-size:11.5px;font-weight:700;color:#333;letter-spacing:0.140px;-webkit-text-stroke:0.2px #333;">Transaction</span>
<span class="t" id="t87" style="left:225.30px;top:468.00px;font-size:11.5px;font-weight:700;color:#333;letter-spacing:0.200px;-webkit-text-stroke:0.2px #333;">Type</span>
<span class="t" id="t88" style="left:272.00px;top:468.00px;font-size:11.5px;font-weight:700;color:#333;letter-spacing:0.500px;-webkit-text-stroke:0.2px #333;">ISIN</span>
<span class="t" id="t89" style="left:304.80px;top:468.00px;font-size:11.5px;font-weight:700;color:#333;letter-spacing:-0.350px;transform:scaleX(0.9163);-webkit-text-stroke:0.2px #333;">WKN</span>
<span class="t" id="t90" style="left:386.40px;top:455.00px;font-size:11.5px;font-weight:700;color:#333;-webkit-text-stroke:0.2px #333;">Order</span>
<span class="t" id="t91" style="left:362.90px;top:468.00px;font-size:11.5px;font-weight:700;color:#333;letter-spacing:0.192px;-webkit-text-stroke:0.2px #333;">participations</span>
<span class="t" id="t92" style="left:459.80px;top:455.00px;font-size:11.5px;font-weight:700;color:#333;-webkit-text-stroke:0.2px #333;">Order</span>
<span class="t" id="t93" style="left:450.50px;top:468.00px;font-size:11.5px;font-weight:700;color:#333;letter-spacing:0.471px;-webkit-text-stroke:0.2px #333;">quanity/</span>
<span class="t" id="t94" style="left:460.40px;top:481.00px;font-size:11.5px;font-weight:700;color:#333;letter-spacing:0.050px;-webkit-text-stroke:0.2px #333;">value</span>
<span class="t" id="t95" style="left:508.50px;top:455.00px;font-size:11.5px;font-weight:700;color:#333;letter-spacing:0.100px;-webkit-text-stroke:0.2px #333;">Holding period</span>
<span class="t" id="t96" style="left:530.59px;top:468.00px;font-size:11.5px;font-weight:700;color:#333;letter-spacing:0.600px;transform:scaleX(1.0143);-webkit-text-stroke:0.2px #333;">[days]</span>
<span class="t" id="t97" style="left:605.50px;top:455.00px;font-size:11.5px;font-weight:700;color:#333;letter-spacing:0.260px;-webkit-text-stroke:0.2px #333;">Volume</span>
<span class="t" id="t98" style="left:609.90px;top:468.00px;font-size:11.5px;font-weight:700;color:#333;letter-spacing:0.175px;-webkit-text-stroke:0.2px #333;">[EUR]</span>
<span class="t" id="t99" style="left:663.90px;top:455.00px;font-size:11.5px;font-weight:700;color:#333;letter-spacing:-0.350px;transform:scaleX(0.9739);-webkit-text-stroke:0.2px #333;">Costs</span>
<span class="t" id="t100" style="left:661.40px;top:468.00px;font-size:11.5px;font-weight:700;color:#333;letter-spacing:0.250px;-webkit-text-stroke:0.2px #333;">[EUR]</span>
<span class="t" id="t101" style="left:701.70px;top:455.00px;font-size:11.5px;font-weight:700;color:#333;-webkit-text-stroke:0.2px #333;">Price</span>
<span class="t" id="t102" style="left:701.70px;top:468.00px;font-size:11.5px;font-weight:700;color:#333;letter-spacing:-0.200px;-webkit-text-stroke:0.2px #333;">[EUR</span>
<span class="t" id="t103" style="left:713.95px;top:481.00px;font-size:11.5px;font-weight:700;color:#333;-webkit-text-stroke:0.2px #333;">]</span>
<span class="t" id="t104" style="left:737.70px;top:455.00px;font-size:11.5px;font-weight:700;color:#333;letter-spacing:0.350px;-webkit-text-stroke:0.2px #333;">Estimated</span>
<span class="t" id="t105" style="left:753.80px;top:468.00px;font-size:11.5px;font-weight:700;color:#333;letter-spacing:0.175px;-webkit-text-stroke:0.2px #333;">price</span>
<span class="t" id="t106" style="left:751.60px;top:481.00px;font-size:11.5px;font-weight:700;color:#333;letter-spacing:0.100px;-webkit-text-stroke:0.2px #333;">[EUR]</span>
<span class="t" id="t107" style="left:820.40px;top:455.00px;font-size:11.5px;font-weight:700;color:#333;letter-spacing:0.075px;-webkit-text-stroke:0.2px #333;">Price</span>
<span class="t" id="t108" style="left:822.30px;top:468.00px;font-size:11.5px;font-weight:700;color:#333;letter-spacing:0.600px;transform:scaleX(1.0040);-webkit-text-stroke:0.2px #333;">date</span>
<span class="t" id="t109" style="left:133.97px;top:499.00px;font-size:11px;font-weight:400;color:#000;letter-spacing:-0.350px;transform:scaleX(0.9310);">CHF</span>
<span class="t" id="t110" style="left:210.00px;top:499.00px;font-size:11px;font-weight:400;color:#000;letter-spacing:-0.150px;">Target FX</span>
<span class="t" id="t111" style="left:436.45px;top:499.00px;font-size:11px;font-weight:400;color:#000;">1</span>
<span class="t" id="t112" style="left:453.40px;top:499.00px;font-size:11px;font-weight:400;color:#000;letter-spacing:-0.050px;">17,905.26</span>
<span class="t" id="t113" style="left:585.25px;top:499.00px;font-size:11px;font-weight:400;color:#000;">0</span>
<span class="t" id="t114" style="left:602.40px;top:499.00px;font-size:11px;font-weight:400;color:#000;letter-spacing:0.189px;">-16,329.00</span>
<span class="t" id="t115" style="left:689.75px;top:499.00px;font-size:11px;font-weight:400;color:#000;">0</span>
<span class="t" id="t116" style="left:710.20px;top:499.00px;font-size:11px;font-weight:400;color:#000;letter-spacing:0.100px;">0.91</span>
<span class="t" id="t117" style="left:778.40px;top:499.00px;font-size:11px;font-weight:400;color:#000;letter-spacing:0.100px;">0.91</span>
<span class="t" id="t118" style="left:815.80px;top:499.00px;font-size:11px;font-weight:400;color:#000;letter-spacing:0.200px;">5/26/2021</span>
<span class="t" id="t119" style="left:134.01px;top:517.00px;font-size:11px;font-weight:400;color:#000;letter-spacing:-0.350px;transform:scaleX(0.8920);">EUR</span>
<span class="t" id="t120" style="left:209.03px;top:517.00px;font-size:11px;font-weight:400;color:#000;letter-spacing:-0.350px;transform:scaleX(0.9730);">Source FX</span>
<span class="t" id="t121" style="left:436.45px;top:517.00px;font-size:11px;font-weight:400;color:#000;">1</span>
<span class="t" id="t122" style="left:465.50px;top:517.00px;font-size:11px;font-weight:400;color:#000;letter-spacing:-0.083px;">-50,000</span>
<span class="t" id="t123" style="left:585.25px;top:517.00px;font-size:11px;font-weight:400;color:#000;">0</span>
<span class="t" id="t124" style="left:606.90px;top:517.00px;font-size:11px;font-weight:400;color:#000;letter-spacing:0.025px;">50,000.00</span>
<span class="t" id="t125" style="left:689.75px;top:517.00px;font-size:11px;font-weight:400;color:#000;">0</span>
<span class="t" id="t126" style="left:709.20px;top:517.00px;font-size:11px;font-weight:400;color:#000;letter-spacing:0.433px;">1.00</span>
<span class="t" id="t127" style="left:777.40px;top:517.00px;font-size:11px;font-weight:400;color:#000;letter-spacing:0.433px;">1.00</span>
<span class="t" id="t128" style="left:815.80px;top:517.00px;font-size:11px;font-weight:400;color:#000;letter-spacing:0.200px;">5/26/2021</span>
<span class="t" id="t129" style="left:134.01px;top:535.00px;font-size:11px;font-weight:400;color:#000;letter-spacing:-0.350px;transform:scaleX(0.8920);">USD</span>
<span class="t" id="t130" style="left:210.00px;top:535.00px;font-size:11px;font-weight:400;color:#000;letter-spacing:-0.150px;">Target FX</span>
<span class="t" id="t131" style="left:436.20px;top:535.00px;font-size:11px;font-weight:400;color:#000;">2</span>
<span class="t" id="t132" style="left:454.40px;top:535.00px;font-size:11px;font-weight:400;color:#000;letter-spacing:-0.175px;">41,240.75</span>
<span class="t" id="t133" style="left:585.25px;top:535.00px;font-size:11px;font-weight:400;color:#000;">0</span>
<span class="t" id="t134" style="left:602.40px;top:535.00px;font-size:11px;font-weight:400;color:#000;letter-spacing:0.189px;">-33,671.00</span>
<span class="t" id="t135" style="left:689.75px;top:535.00px;font-size:11px;font-weight:400;color:#000;">0</span>
<span class="t" id="t136" style="left:710.20px;top:535.00px;font-size:11px;font-weight:400;color:#000;letter-spacing:0.100px;">0.82</span>
<span class="t" id="t137" style="left:778.40px;top:535.00px;font-size:11px;font-weight:400;color:#000;letter-spacing:0.100px;">0.82</span>
<span class="t" id="t138" style="left:815.80px;top:535.00px;font-size:11px;font-weight:400;color:#000;letter-spacing:0.200px;">5/26/2021</span>
</div></body></html>
